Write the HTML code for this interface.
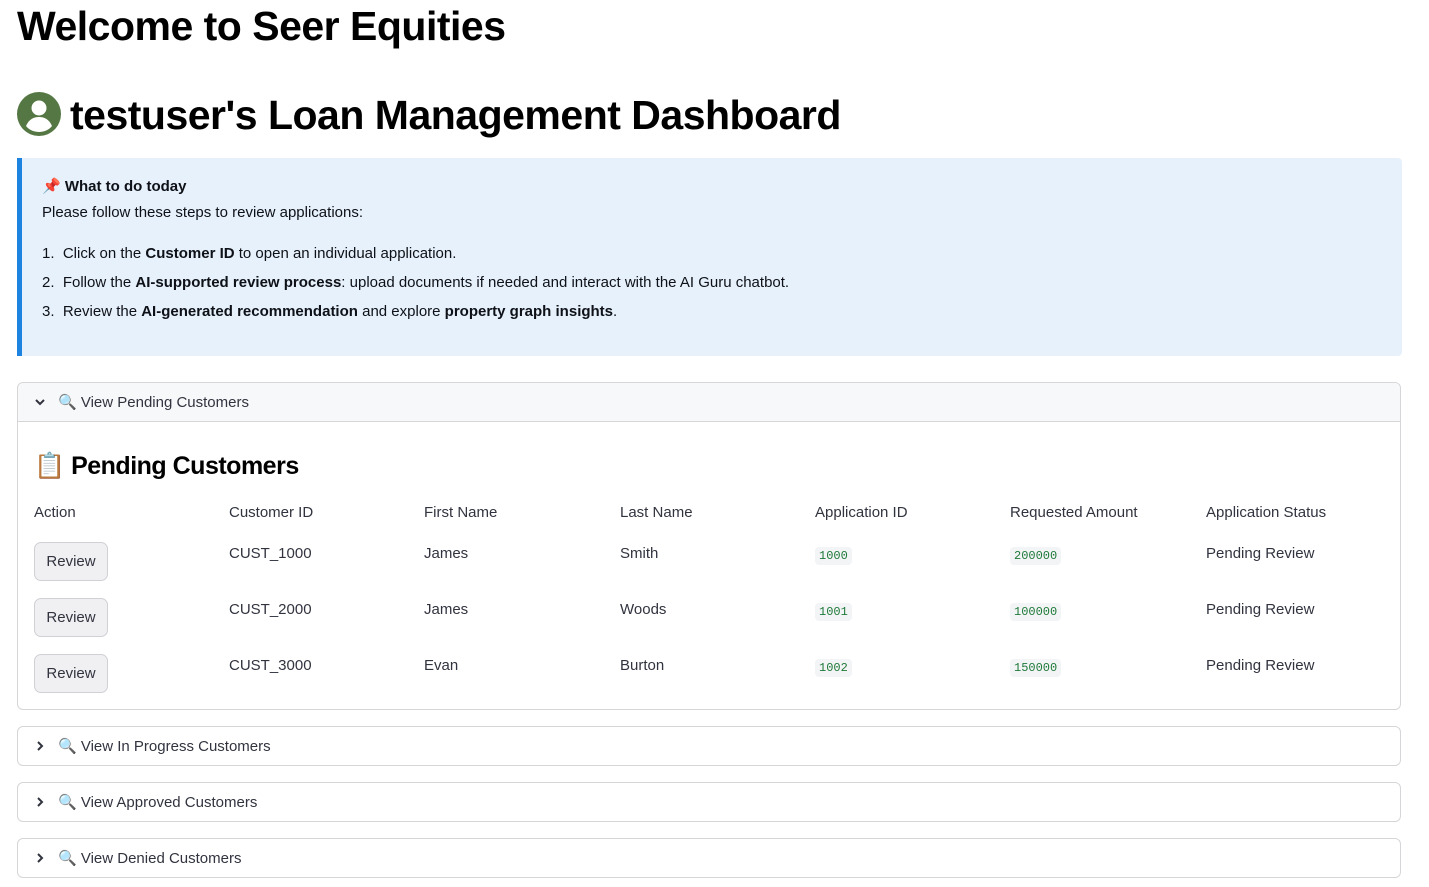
<!DOCTYPE html>
<html><head><style>
body{margin:0;background:#fff;font-family:"Liberation Sans",sans-serif;color:#31333f;width:1429px;height:887px;overflow:hidden;position:relative}
.a{position:absolute}
h1{margin:0;font-weight:700;color:#000;position:absolute;white-space:nowrap;letter-spacing:-0.5px}
.info{left:17px;top:158px;width:1380px;height:198px;background:#e7f1fb;border-left:5px solid #1c83e1;border-radius:0 4px 4px 0}
.info div{position:absolute;left:20px;font-size:15px;color:#0e1117;white-space:nowrap}
.exp{left:17px;width:1382px;border:1px solid #d6d6d9;border-radius:6px;}
.eh{height:38px;font-size:15px;color:#31333f;display:flex;align-items:center;padding-left:16px}
.eh .ch{width:24px;display:flex;align-items:center}
.c{position:absolute;font-size:15px;color:#31333f;white-space:nowrap}
.btn{position:absolute;left:34px;width:72px;height:37px;border:1px solid #d0d0d5;border-radius:7px;background:#f0f0f2;font-size:15px;display:flex;align-items:center;justify-content:center;color:#31333f}
code{font-family:"Liberation Mono",monospace;font-size:12px;color:#1f7a3a;background:#f3f4f6;padding:2px 4px;border-radius:4px}
</style></head><body>
<h1 style="left:17px;top:3px;font-size:41px">Welcome to Seer Equities</h1>
<svg class="a" style="left:17px;top:92px" width="44" height="44" viewBox="0 0 44 44"><circle cx="22" cy="22" r="22" fill="#557744"/><circle cx="22" cy="16" r="7.5" fill="#fff"/><path d="M9 34c3-7 8-9 13-9s10 2 13 9c-3 4-8 6-13 6s-10-2-13-6z" fill="#fff"/></svg>
<h1 style="left:70px;top:92px;font-size:41px">testuser's Loan Management Dashboard</h1>
<div class="a info">
<div style="top:19px;font-weight:700">📌 What to do today</div>
<div style="top:46px">Please follow these steps to review applications:</div>
<div style="top:87px">1.&nbsp; Click on the <b>Customer ID</b> to open an individual application.</div>
<div style="top:116px">2.&nbsp; Follow the <b>AI-supported review process</b>: upload documents if needed and interact with the AI Guru chatbot.</div>
<div style="top:145px">3.&nbsp; Review the <b>AI-generated recommendation</b> and explore <b>property graph insights</b>.</div>
</div>
<div class="a exp" style="top:382px;height:326px">
<div class="eh" style="background:#f7f8f9;border-bottom:1px solid #d6d6d9;border-radius:6px 6px 0 0"><span class="ch"><svg width="12" height="12" viewBox="0 0 12 12"><path d="M2 4l4 4 4-4" fill="none" stroke="#31333f" stroke-width="2"/></svg></span>🔍 View Pending Customers</div>
</div>
<div class="a" style="left:34px;top:452px;font-size:25px;font-weight:700;color:#000;white-space:nowrap;letter-spacing:-0.5px">📋 Pending Customers</div>
<div class="c" style="left:34px;top:504px">Action</div>
<div class="c" style="left:229px;top:504px">Customer ID</div>
<div class="c" style="left:424px;top:504px">First Name</div>
<div class="c" style="left:620px;top:504px">Last Name</div>
<div class="c" style="left:815px;top:504px">Application ID</div>
<div class="c" style="left:1010px;top:504px">Requested Amount</div>
<div class="c" style="left:1206px;top:504px">Application Status</div>

<div class="btn" style="top:542px">Review</div>
<div class="c" style="left:229px;top:545px">CUST_1000</div><div class="c" style="left:424px;top:545px">James</div><div class="c" style="left:620px;top:545px">Smith</div><div class="c" style="left:815px;top:546px"><code>1000</code></div><div class="c" style="left:1010px;top:546px"><code>200000</code></div><div class="c" style="left:1206px;top:545px">Pending Review</div>
<div class="btn" style="top:598px">Review</div>
<div class="c" style="left:229px;top:601px">CUST_2000</div><div class="c" style="left:424px;top:601px">James</div><div class="c" style="left:620px;top:601px">Woods</div><div class="c" style="left:815px;top:602px"><code>1001</code></div><div class="c" style="left:1010px;top:602px"><code>100000</code></div><div class="c" style="left:1206px;top:601px">Pending Review</div>
<div class="btn" style="top:654px">Review</div>
<div class="c" style="left:229px;top:657px">CUST_3000</div><div class="c" style="left:424px;top:657px">Evan</div><div class="c" style="left:620px;top:657px">Burton</div><div class="c" style="left:815px;top:658px"><code>1002</code></div><div class="c" style="left:1010px;top:658px"><code>150000</code></div><div class="c" style="left:1206px;top:657px">Pending Review</div>

<div class="a exp" style="top:726px"><div class="eh"><span class="ch"><svg width="12" height="12" viewBox="0 0 12 12"><path d="M4 2l4 4-4 4" fill="none" stroke="#31333f" stroke-width="2"/></svg></span>🔍 View In Progress Customers</div></div>
<div class="a exp" style="top:782px"><div class="eh"><span class="ch"><svg width="12" height="12" viewBox="0 0 12 12"><path d="M4 2l4 4-4 4" fill="none" stroke="#31333f" stroke-width="2"/></svg></span>🔍 View Approved Customers</div></div>
<div class="a exp" style="top:838px"><div class="eh"><span class="ch"><svg width="12" height="12" viewBox="0 0 12 12"><path d="M4 2l4 4-4 4" fill="none" stroke="#31333f" stroke-width="2"/></svg></span>🔍 View Denied Customers</div></div>
</body></html>
